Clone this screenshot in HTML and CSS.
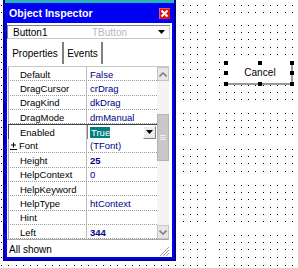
FILE: index.html
```html
<!DOCTYPE html>
<html>
<head>
<meta charset="utf-8">
<title>Object Inspector</title>
<link rel="stylesheet" href="styles.css">
</head>
<body>
<div class="desk">
  <svg class="dots" id="dots" width="298" height="268" xmlns="http://www.w3.org/2000/svg"></svg>

  <div class="btn">
    <span class="btn-text">Cancel</span>
    <i class="h hx1 hy1"></i><i class="h hx2 hy1"></i><i class="h hx3 hy1"></i>
    <i class="h hx1 hy2"></i><i class="h hx3 hy2"></i>
    <i class="h hx1 hy3"></i><i class="h hx2 hy3"></i><i class="h hx3 hy3"></i>
  </div>

  <div class="inspector">
    <div class="titlebar">
      <span class="title">Object Inspector</span>
      <span class="close">
        <svg width="11" height="11" viewBox="0 0 11 11">
          <rect x="0" y="0" width="11" height="11" fill="#e41010"/>
          <path d="M0 0H11M0 0V11" stroke="#f0a0a0" stroke-width="1" fill="none"/>
          <path d="M2.5 2.5L8.5 8.5M8.5 2.5L2.5 8.5" stroke="#ffffff" stroke-width="2"/>
        </svg>
      </span>
    </div>
    <div class="body">
      <div class="combo">
        <span class="cname">Button1</span>
        <span class="ctype">TButton</span>
        <svg class="carrow" width="7" height="4" viewBox="0 0 7 4"><path d="M0 0H7L3.5 4Z" fill="#000"/></svg>
      </div>
      <div class="tabs">
        <div class="tab tab-props">Properties</div>
        <div class="tab tab-events">Events</div>
      </div>
      <div class="grid">
        <div class="rows">
          <div class="row"><div class="name">Default</div><div class="val">False</div></div>
          <div class="row"><div class="name">DragCursor</div><div class="val">crDrag</div></div>
          <div class="row"><div class="name">DragKind</div><div class="val">dkDrag</div></div>
          <div class="row"><div class="name">DragMode</div><div class="val">dmManual</div></div>
          <div class="row row-sel">
            <div class="name">Enabled</div>
            <div class="val editor">
              <span class="hl">True</span>
              <span class="dd"><svg width="7" height="4" viewBox="0 0 7 4"><path d="M0 0H7L3.5 4Z" fill="#000"/></svg></span>
            </div>
          </div>
          <div class="row"><div class="name name-exp"><svg class="exp" width="7" height="8" viewBox="0 0 7 8"><path d="M3.5 0.5V5.5M1 3H6M0 7.5H7" stroke="#000" stroke-width="1" fill="none"/></svg>Font</div><div class="val">(TFont)</div></div>
          <div class="row"><div class="name">Height</div><div class="val bold">25</div></div>
          <div class="row"><div class="name">HelpContext</div><div class="val">0</div></div>
          <div class="row"><div class="name">HelpKeyword</div><div class="val"></div></div>
          <div class="row"><div class="name">HelpType</div><div class="val">htContext</div></div>
          <div class="row"><div class="name">Hint</div><div class="val"></div></div>
          <div class="row"><div class="name">Left</div><div class="val bold">344</div></div>
        </div>
        <div class="scrollbar">
          <div class="sb-btn"><svg width="8" height="5" viewBox="0 0 8 5"><path d="M0.5 4.5L4 1L7.5 4.5" stroke="#808080" stroke-width="1.6" fill="none"/></svg></div>
          <div class="sb-track">
            <div class="sb-thumb"><span class="grip-line"></span><span class="grip-line"></span><span class="grip-line"></span></div>
          </div>
          <div class="sb-btn"><svg width="8" height="5" viewBox="0 0 8 5"><path d="M0.5 0.5L4 4L7.5 0.5" stroke="#808080" stroke-width="1.6" fill="none"/></svg></div>
        </div>
      </div>
      <div class="status">
        <span class="status-text">All shown</span>
        <svg class="sizegrip" width="10" height="10" viewBox="0 0 10 10"><path d="M10 1L1 10M10 4L4 10M10 7L7 10" stroke="#a0a0a0" stroke-width="1" fill="none"/></svg>
      </div>
    </div>
  </div>
</div>
<script src="script.js"></script>
</body>
</html>
```

FILE: styles.css
```css
* { box-sizing: border-box; }
html, body { margin: 0; padding: 0; background: #ffffff; }
body {
  font-family: "Liberation Sans", Arial, sans-serif;
  font-size: 9.5px;
  color: #000;
}
.desk {
  position: relative;
  width: 298px;
  height: 268px;
  overflow: hidden;
  background: #ffffff;
}
.dots { position: absolute; left: 0; top: 0; }

/* Cancel button on the form canvas */
.btn {
  position: absolute;
  left: 225px;
  top: 62px;
  width: 68px;
  height: 23px;
  background: #ffffff;
  border-right: 2px solid #9a9a9a;
  border-bottom: 2px solid #9a9a9a;
  display: flex;
  align-items: center;
  justify-content: center;
  padding: 0 0 1px 4px;
}
.btn-text { font-size: 10px; letter-spacing: 0.1px; }
.h {
  position: absolute;
  width: 4px;
  height: 4px;
  background: #000;
}
.hx1 { left: -1px; }
.hx2 { left: 33px; }
.hx3 { left: 65px; }
.hy1 { top: -1px; }
.hy2 { top: 9px; }
.hy3 { top: 20px; }

/* Inspector window */
.inspector {
  position: absolute;
  left: 3px;
  top: 0;
  width: 173px;
  height: 261px;
  border: 2px solid #00008c;
  border-top: 0;
  background: #0000f4;
  padding: 0 2px 2px 2px;
  display: flex;
  flex-direction: column;
}
.titlebar {
  height: 23px;
  border-top: 3px solid #2ab4b4;
  display: flex;
  align-items: center;
  padding-left: 1px;
  margin: 0 -2px;
  padding-right: 4px;
}
.title {
  color: #ffffff;
  font-weight: bold;
  font-size: 10.6px;
  padding-left: 3px;
}
.close { margin-left: auto; display: flex; }

.body {
  flex: 1;
  background: #ffffff;
  display: flex;
  flex-direction: column;
  min-height: 0;
}
.combo {
  margin-top: 2px;
  width: 163px;
  height: 14px;
  border-top: 1px solid #808080;
  border-left: 1px solid #808080;
  border-right: 1px solid #c8c8c8;
  border-bottom: 1px solid #c8c8c8;
  display: flex;
  align-items: center;
  padding-left: 5px;
  font-size: 10px;
}
.cname { width: 79px; }
.ctype { color: #b8b8b8; }
.carrow { margin-left: auto; margin-right: 4px; }

.tabs {
  margin-top: 3px;
  height: 24px;
  display: flex;
  padding-left: 3px;
  padding-bottom: 2px;
}
.tab {
  display: flex;
  align-items: center;
  justify-content: center;
  font-size: 10px;
  border-right: 2px solid #808080;
}
.tab-props { width: 54px; padding-right: 2px; }
.tab-events { width: 39px; }

.grid {
  height: 173.3px;
  display: flex;
  margin-left: 1px;
  margin-right: 3px;
  border-top: 1px solid #c8c8c8;
}
.rows {
  width: 149px;
  border-left: 1px solid #a8a8a8;
  display: flex;
  flex-direction: column;
}
.row {
  height: 14.36px;
  display: flex;
  align-items: center;
  flex: none;
  background-image: linear-gradient(to right, #9a9a9a 50%, transparent 50%);
  background-size: 2px 1px;
  background-repeat: repeat-x;
  background-position: 1px 100%;
}
.name {
  width: 78px;
  height: 100%;
  display: flex;
  align-items: center;
  padding-left: 11px;
  border-right: 1px solid #bcbcbc;
}
.name-exp { padding-left: 1px; }
.exp { margin-right: 2px; }
.val {
  flex: 1;
  padding-left: 3px;
  color: #00008a;
}
.bold { font-weight: bold; }

.row-sel {
  background-image: none;
  border-top: 1px solid #404040;
  margin-left: -1px;
  border-left: 1px solid #404040;
}
.row-sel .name { padding-left: 11px; }
.editor {
  height: 14px;
  display: flex;
  align-items: center;
  padding-left: 2px;
  border-left: 1px solid #808080;
  margin-right: 1px;
}
.hl {
  background: #008080;
  color: #ffffff;
  padding: 0 1px;
  height: 11px;
  line-height: 11px;
  width: 20px;
}
.dd {
  margin-left: auto;
  width: 13px;
  height: 13px;
  background: #ececec;
  border-top: 1px solid #ffffff;
  border-left: 1px solid #ffffff;
  border-right: 1px solid #808080;
  border-bottom: 1px solid #808080;
  display: flex;
  align-items: center;
  justify-content: center;
}

.scrollbar {
  width: 12px;
  display: flex;
  flex-direction: column;
  background: #f4f4f4;
}
.sb-btn {
  height: 14px;
  background: #e6e6e6;
  border: 1px solid #c4c4c4;
  display: flex;
  align-items: center;
  justify-content: center;
}
.sb-track {
  flex: 1;
  padding-top: 33px;
  padding-bottom: 64px;
  display: flex;
}
.sb-thumb {
  flex: 1;
  background: #c8c8c8;
  border: 1px solid #b4b4b4;
  display: flex;
  flex-direction: column;
  align-items: center;
  justify-content: center;
  gap: 1px;
}
.grip-line {
  width: 6px;
  height: 1px;
  background: #f0f0f0;
}

.status {
  flex: 1;
  margin-right: 3px;
  border-top: 1px solid #a8a8a8;
  display: flex;
  align-items: center;
  padding-left: 2px;
  padding-top: 1px;
  position: relative;
}
.status-text { font-size: 10px; }
.sizegrip { margin-left: auto; margin-right: 0; align-self: flex-end; margin-bottom: 1px; }
```

FILE: script.js
```js
(function () {
  var svg = document.getElementById('dots');
  var rows = [5, 12, 25, 32, 39, 47, 54, 62, 69, 77, 85, 92, 99, 113, 120, 127, 134,
              149, 156, 163, 171, 185, 192, 199, 207, 214, 221, 235, 242, 249, 257, 265];
  var s = '';
  for (var i = 0; i <= 40; i++) {
    if (i === 29) continue;
    var x = Math.round(1 + i * 7.27);
    for (var j = 0; j < rows.length; j++) {
      s += '<rect x="' + x + '" y="' + rows[j] + '" width="1" height="1" fill="#000"/>';
    }
  }
  svg.innerHTML = s;
})();
```
